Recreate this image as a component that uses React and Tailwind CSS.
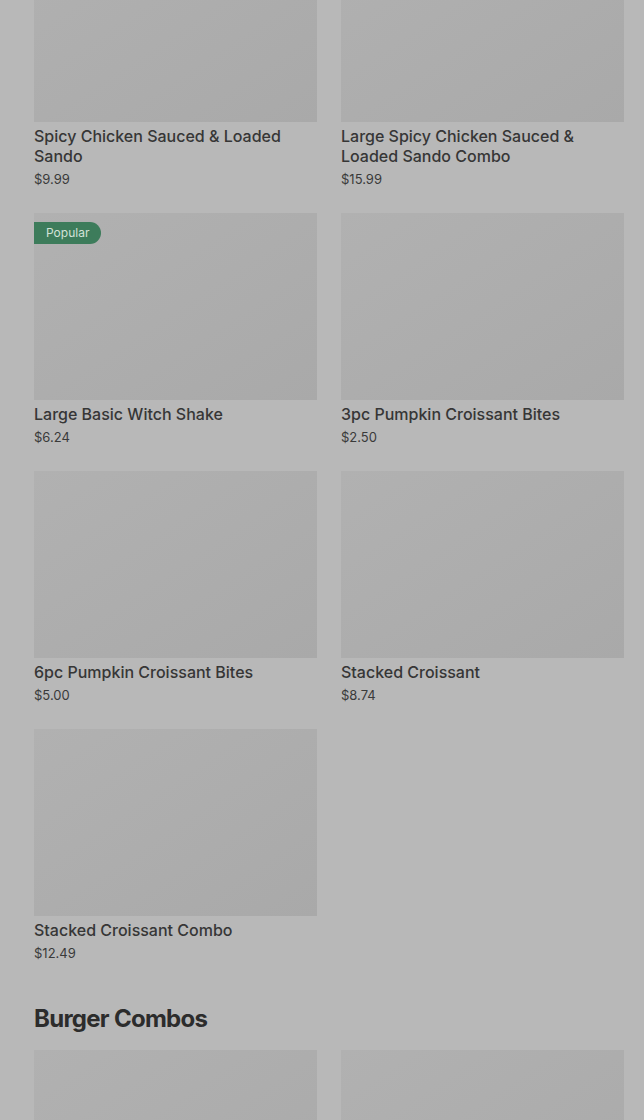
const items = [
  { name: 'Spicy Chicken Sauced & Loaded Sando', price: '$9.99' },
  { name: 'Large Spicy Chicken Sauced & Loaded Sando Combo', price: '$15.99' },
  { name: 'Large Basic Witch Shake', price: '$6.24', popular: true },
  { name: '3pc Pumpkin Croissant Bites', price: '$2.50' },
  { name: '6pc Pumpkin Croissant Bites', price: '$5.00' },
  { name: 'Stacked Croissant', price: '$8.74' },
  { name: 'Stacked Croissant Combo', price: '$12.49' },
];

const ItemCard = ({ item }) => (
  <div className="mb-6">
    <div className="relative h-[187px] bg-gradient-to-br from-[#b1b1b1] to-[#a9a9a9]">
      {item.popular && (
        <span className="absolute left-0 top-[9px] h-[22px] pl-3 pr-3 flex items-center rounded-r-full bg-[#3d7c5b] text-[12px] text-[#d3e2d8]">
          Popular
        </span>
      )}
    </div>
    <p className="mt-1 text-[16px] leading-5 font-medium text-[#363636]">{item.name}</p>
    <p className="mt-[3px] text-[13px] leading-5 text-[#3a3a3a]">{item.price}</p>
  </div>
);

export default function App() {
  return (
    <div
      className="min-h-[1120px] bg-[#b8b8b8] overflow-hidden"
      style={{ fontFamily: 'Inter, "Noto Sans", sans-serif' }}
    >
      <div className="pl-[34px] pr-5 -mt-[65px]">
        <div className="grid grid-cols-2 gap-x-6">
          {items.map((item) => (
            <ItemCard key={item.name} item={item} />
          ))}
        </div>
        <h2 className="mt-4 text-[24px] leading-8 font-bold tracking-[-0.03em] text-[#2c2c2c]">Burger Combos</h2>
        <div className="mt-[15px] grid grid-cols-2 gap-x-6">
          <div className="h-[188px] bg-gradient-to-br from-[#b1b1b1] to-[#a9a9a9]"></div>
          <div className="h-[188px] bg-gradient-to-br from-[#b1b1b1] to-[#a9a9a9]"></div>
        </div>
      </div>
    </div>
  );
}
